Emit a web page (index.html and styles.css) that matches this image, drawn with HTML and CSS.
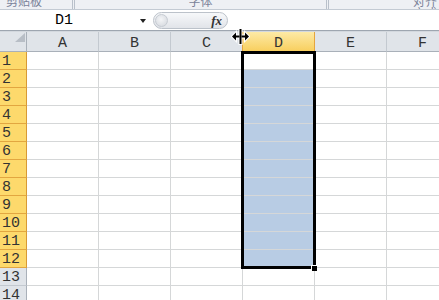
FILE: index.html
```html
<!DOCTYPE html>
<html lang="zh-CN">
<head>
  <meta charset="UTF-8">
  <meta name="viewport" content="width=device-width, initial-scale=1.0">
  <title>工作表 - 选择 D 列</title>
  <link rel="stylesheet" href="styles.css">
</head>

<body>
  <!-- Ribbon (bottom edge only) -->
  <div class="ribbon">
    <div class="ribbon-group g1"><span class="group-label">剪贴板</span></div>
    <div class="ribbon-group g2"><span class="group-label">字体</span></div>
    <div class="ribbon-group g3"><span class="group-label">对齐方式</span></div>
  </div>

  <!-- Formula Bar -->
  <div class="formula-bar">
    <div class="name-box">
      <span class="name-text">D1</span>
      <span class="name-arrow"></span>
    </div>
    <div class="fx-pill">
      <span class="fx-knob"></span>
      <span class="fx">fx</span>
    </div>
    <div class="formula-input"></div>
  </div>

  <!-- Sheet Grid -->
  <div class="sheet">
    <div class="row head">
      <div class="corner"></div>
      <div class="col-head">A</div>
      <div class="col-head">B</div>
      <div class="col-head">C</div>
      <div class="col-head sel">D</div>
      <div class="col-head">E</div>
      <div class="col-head">F</div>
    </div>

    <div class="row">
      <div class="row-head sel">1</div>
      <div class="cell"></div><div class="cell"></div><div class="cell"></div>
      <div class="cell"></div><div class="cell"></div><div class="cell"></div>
    </div>
    <div class="row">
      <div class="row-head sel">2</div>
      <div class="cell"></div><div class="cell"></div><div class="cell"></div>
      <div class="cell blue"></div><div class="cell"></div><div class="cell"></div>
    </div>
    <div class="row">
      <div class="row-head sel">3</div>
      <div class="cell"></div><div class="cell"></div><div class="cell"></div>
      <div class="cell blue"></div><div class="cell"></div><div class="cell"></div>
    </div>
    <div class="row">
      <div class="row-head sel">4</div>
      <div class="cell"></div><div class="cell"></div><div class="cell"></div>
      <div class="cell blue"></div><div class="cell"></div><div class="cell"></div>
    </div>
    <div class="row">
      <div class="row-head sel">5</div>
      <div class="cell"></div><div class="cell"></div><div class="cell"></div>
      <div class="cell blue"></div><div class="cell"></div><div class="cell"></div>
    </div>
    <div class="row">
      <div class="row-head sel">6</div>
      <div class="cell"></div><div class="cell"></div><div class="cell"></div>
      <div class="cell blue"></div><div class="cell"></div><div class="cell"></div>
    </div>
    <div class="row">
      <div class="row-head sel">7</div>
      <div class="cell"></div><div class="cell"></div><div class="cell"></div>
      <div class="cell blue"></div><div class="cell"></div><div class="cell"></div>
    </div>
    <div class="row">
      <div class="row-head sel">8</div>
      <div class="cell"></div><div class="cell"></div><div class="cell"></div>
      <div class="cell blue"></div><div class="cell"></div><div class="cell"></div>
    </div>
    <div class="row">
      <div class="row-head sel">9</div>
      <div class="cell"></div><div class="cell"></div><div class="cell"></div>
      <div class="cell blue"></div><div class="cell"></div><div class="cell"></div>
    </div>
    <div class="row">
      <div class="row-head sel">10</div>
      <div class="cell"></div><div class="cell"></div><div class="cell"></div>
      <div class="cell blue"></div><div class="cell"></div><div class="cell"></div>
    </div>
    <div class="row">
      <div class="row-head sel">11</div>
      <div class="cell"></div><div class="cell"></div><div class="cell"></div>
      <div class="cell blue"></div><div class="cell"></div><div class="cell"></div>
    </div>
    <div class="row">
      <div class="row-head sel">12</div>
      <div class="cell"></div><div class="cell"></div><div class="cell"></div>
      <div class="cell blue"></div><div class="cell"></div><div class="cell"></div>
    </div>
    <div class="row">
      <div class="row-head">13</div>
      <div class="cell"></div><div class="cell"></div><div class="cell"></div>
      <div class="cell"></div><div class="cell"></div><div class="cell"></div>
    </div>
    <div class="row">
      <div class="row-head">14</div>
      <div class="cell"></div><div class="cell"></div><div class="cell"></div>
      <div class="cell"></div><div class="cell"></div><div class="cell"></div>
    </div>

    <!-- Selection Outline D1:D12 -->
    <div class="selection"></div>
    <div class="fill-handle"></div>
  </div>

  <!-- Column Resize Cursor -->
  <svg class="resize-cursor" width="19" height="17" viewBox="0 0 19 17">
    <defs>
      <g id="cursorShape">
        <rect x="8.5" y="1" width="2" height="15"/>
        <polygon points="1,8.5 5,4.5 5,7.5 8.5,7.5 8.5,9.5 5,9.5 5,12.5"/>
        <polygon points="18,8.5 14,4.5 14,7.5 10.5,7.5 10.5,9.5 14,9.5 14,12.5"/>
      </g>
    </defs>
    <use href="#cursorShape" fill="#fff" stroke="#fff" stroke-width="2"/>
    <use href="#cursorShape" fill="#000"/>
  </svg>
</body>
</html>
```

FILE: styles.css
```css
/* Global Styles */
body {
  margin: 0;
  width: 439px;
  height: 300px;
  overflow: hidden;
  position: relative;
  background-color: #ffffff;
  font-family: "Liberation Mono", "DejaVu Sans Mono", monospace;
  color: #333;
}

/* Ribbon Edge */
.ribbon {
  display: flex;
  height: 9px;
  border-bottom: 1px solid #c3cad3;
  background-color: #eef0f4;
  overflow: hidden;
}
.ribbon-group {
  height: 9px;
  overflow: hidden;
  font-family: "Noto Sans CJK SC", sans-serif;
  font-size: 12px;
  line-height: 12px;
  color: #7a8299;
}
.group-label {
  display: block;
  margin-top: -5px;
}
.g1 {
  width: 73px;
  padding-left: 6px;
  box-sizing: border-box;
  border-right: 1px solid #b9c0ca;
}
.g2 {
  width: 251px;
  margin-left: 1px;
  border-left: 1px solid #b9c0ca;
  border-right: 1px solid #b9c0ca;
  text-align: center;
}
.g3 {
  flex: 1;
  margin-left: 1px;
  padding-left: 84px;
  border-left: 1px solid #b9c0ca;
}

/* Formula Bar */
.formula-bar {
  display: flex;
  height: 20px;
  border-bottom: 1px solid #9ea6b0;
  background-color: #ffffff;
}
.name-box {
  position: relative;
  width: 150px;
  font-size: 15px;
  line-height: 21px;
  color: #000;
}
.name-text {
  padding-left: 55px;
}
.name-arrow {
  position: absolute;
  left: 140px;
  top: 9px;
  width: 0;
  height: 0;
  border-left: 3.5px solid transparent;
  border-right: 3.5px solid transparent;
  border-top: 4px solid #222;
}
.fx-pill {
  position: relative;
  width: 75px;
  height: 17px;
  margin: 2px 0 0 3px;
  box-sizing: border-box;
  border: 1px solid #bcc2ca;
  border-radius: 9px;
  background: linear-gradient(#f7f8fa, #e1e4e9);
}
.fx-knob {
  position: absolute;
  left: 1px;
  top: 1px;
  width: 11px;
  height: 11px;
  border-radius: 50%;
  border: 1px solid #c6cbd2;
  background: radial-gradient(circle at 45% 40%, #f4f5f7, #d2d6dc);
}
.fx {
  position: absolute;
  right: 5px;
  top: 0;
  font-family: "Liberation Serif", serif;
  font-style: italic;
  font-weight: bold;
  font-size: 13px;
  line-height: 15px;
  color: #333;
}
.formula-input {
  flex: 1;
  margin-left: 2px;
}

/* Sheet Grid */
.sheet {
  position: relative;
  border-top: 1px solid #d3d8de;
}
.row {
  display: grid;
  grid-template-columns: 27px repeat(6, 72px);
  grid-template-rows: 18px;
  height: 18px;
}
.row.head {
  grid-template-rows: 20px;
  height: 20px;
}
.row > div {
  box-sizing: border-box;
  height: 100%;
  overflow: hidden;
}
.cell {
  border-right: 1px solid #d5d7d8;
  border-bottom: 1px solid #d5d7d8;
}
.cell.blue {
  background-color: #b8cce4;
}

/* Headers */
.corner {
  position: relative;
  background-color: #e0e4e9;
  border-right: 1px solid #a9b0b9;
  border-bottom: 1px solid #a9b0b9;
}
.corner::after {
  content: "";
  position: absolute;
  right: 1px;
  bottom: 9px;
  width: 0;
  height: 0;
  border-left: 10px solid transparent;
  border-bottom: 9px solid #b8bec6;
}
.col-head {
  background-color: #e0e4e9;
  border-right: 1px solid #c3c9d0;
  border-bottom: 1px solid #a9b0b9;
  text-align: center;
  font-size: 15px;
  line-height: 23px;
}
.col-head.sel {
  background: linear-gradient(#fdeaa6, #f8cf5f);
  border-right-color: #e5a53e;
  border-bottom-color: #e5a53e;
  box-shadow: -1px 0 0 #e5a53e;
}
.row-head {
  background-color: #e0e4e9;
  border-right: 1px solid #a9b0b9;
  border-bottom: 1px solid #c3c9d0;
  padding-left: 2px;
  font-size: 15px;
  line-height: 19px;
}
.row-head.sel {
  background-color: #fdd96c;
  border-right-color: #d89a35;
  border-bottom-color: #e2a640;
}

/* Selection */
.selection {
  position: absolute;
  left: 241px;
  top: 19px;
  width: 75px;
  height: 218px;
  box-sizing: border-box;
  border: 3px solid #000;
}
.fill-handle {
  position: absolute;
  left: 311px;
  top: 233px;
  width: 5px;
  height: 5px;
  background-color: #000;
  border: 1px solid #fff;
  border-width: 1px 0 0 1px;
}

/* Cursor */
.resize-cursor {
  position: absolute;
  left: 231px;
  top: 28px;
}
```
